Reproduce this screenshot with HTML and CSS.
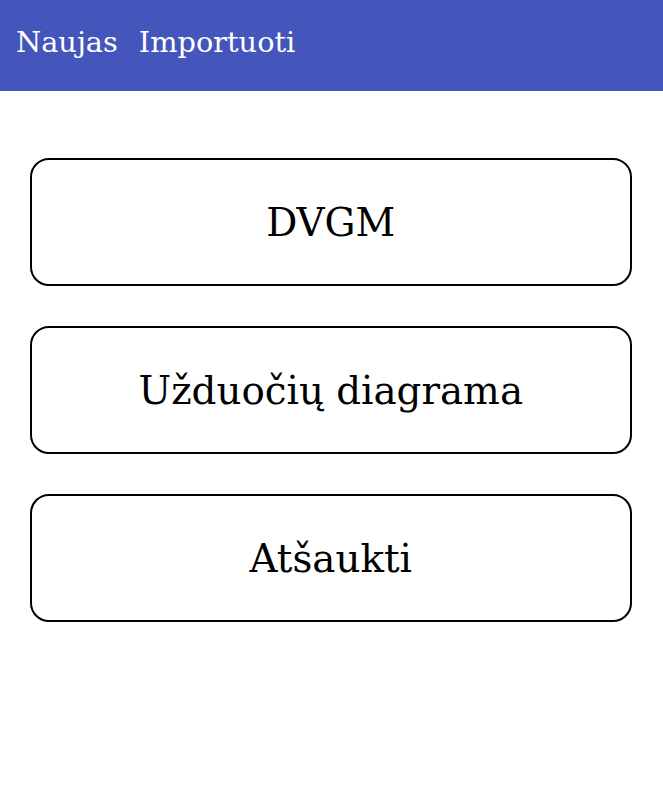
FILE: index.html
```html
<!DOCTYPE html>
<html lang="lt">
<head>
<meta charset="utf-8">
<link rel="stylesheet" href="styles.css">
</head>
<body>
<header class="topbar">
  <span class="menu-item">Naujas</span>
  <span class="menu-item">Importuoti</span>
</header>
<main class="options">
  <button class="option">DVGM</button>
  <button class="option">Užduočių diagrama</button>
  <button class="option">Atšaukti</button>
</main>
</body>
</html>
```
FILE: styles.css
```css
html, body {
  margin: 0;
  padding: 0;
  background: #ffffff;
  font-family: "DejaVu Serif", serif;
}
.topbar {
  height: 91px;
  background: #4455bb;
  display: flex;
  align-items: center;
  padding-left: 16px;
  gap: 21px;
  box-sizing: border-box;
}
.menu-item {
  color: #ffffff;
  font-size: 28.8px;
  padding-bottom: 7px;
}
.options {
  display: flex;
  flex-direction: column;
  gap: 40px;
  padding: 67px 31px 0 29.5px;
}
.option {
  height: 128px;
  border: 2px solid #000000;
  border-radius: 19px;
  background: #ffffff;
  font-family: "DejaVu Serif", serif;
  font-size: 38.8px;
  color: #000000;
  cursor: pointer;
}
```
